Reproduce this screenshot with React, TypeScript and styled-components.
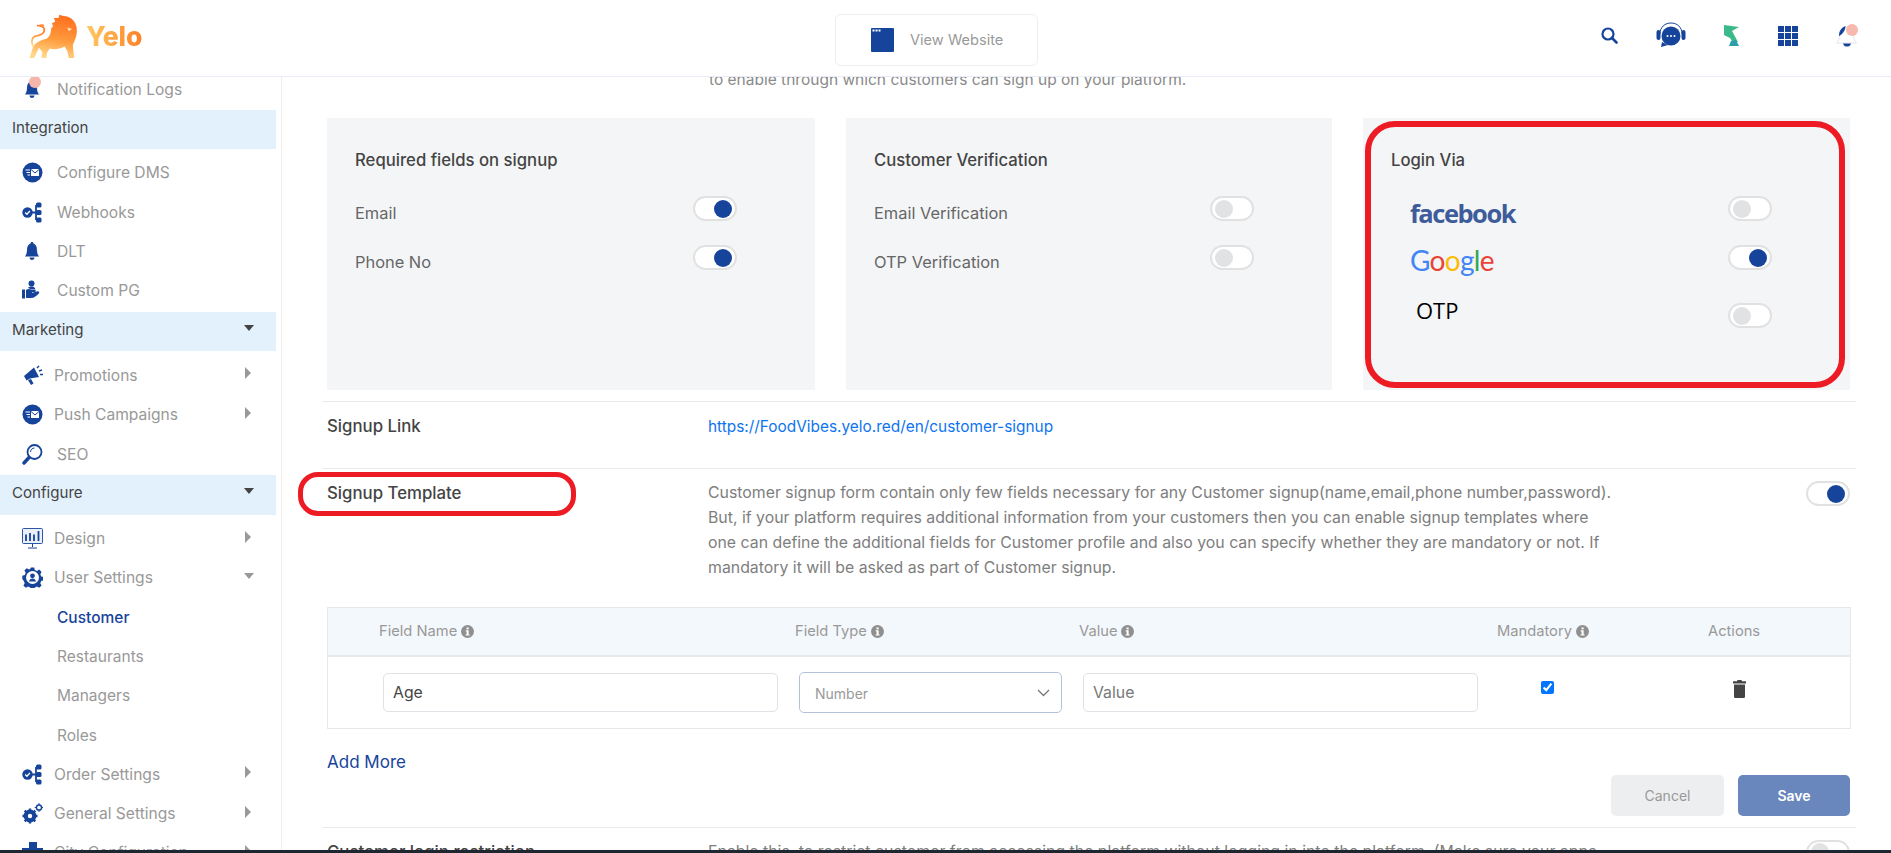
import React from "react";
import styled, { createGlobalStyle } from "styled-components";

const FONT = `Inter, "Liberation Sans", sans-serif`;
const BLUE = "#17449b";

const Global = createGlobalStyle`
  html, body { margin: 0; padding: 0; background: #fff; }
  body { font-family: ${FONT}; overflow: hidden; }
  * { box-sizing: border-box; }
`;

const Shell = styled.div`
  width: 1891px; height: 853px; display: flex; flex-direction: column; overflow: hidden; background: #fff;
`;
const Header = styled.header`
  position: relative; z-index: 2; height: 77px; flex: none; display: flex; align-items: center;
  background: #fff; border-bottom: 1px solid #e9ecf5; padding-right: 32px;
`;
const Brand = styled.div`
  width: 835px; flex: none; display: flex; align-items: center; gap: 8px; padding: 0 0 4px 29px;
`;
const BrandName = styled.span`
  font: 800 26.5px/1 ${FONT};
  background: linear-gradient(90deg, #ffc966, #ff7f24);
  -webkit-background-clip: text; background-clip: text; color: transparent;
`;
const ViewSite = styled.div`
  width: 203px; height: 52px; flex: none; display: flex; align-items: center; gap: 16px; padding-left: 35px;
  border: 1px solid #eeeeee; border-radius: 6px; color: #9a9a9a; font-size: 14.6px; margin-top: 4px;
`;
const HeaderIcons = styled.div`
  margin-left: auto; display: flex; align-items: center; gap: 38px; padding-bottom: 5px;
`;
const Body = styled.div`
  flex: 1; min-height: 0; display: flex; overflow: hidden;
`;
const Sidebar = styled.nav`
  width: 282px; flex: none; padding-right: 5px; border-right: 1px solid #eeeeee; overflow: hidden;
`;
const Band = styled.div`
  height: 39.5px; margin: 1.5px 0 4.3px; background: #e3f1fc; display: flex; align-items: center; justify-content: space-between;
  padding: 0 25px 4px 12px; font-size: 15.1px; color: #444;
`;
const Item = styled.div<{ $arrow?: boolean }>`
  height: 39.3px; display: flex; align-items: center; padding-left: 22px; padding-right: 25px;
  font-size: 15.6px; color: #999;
  > span { margin-left: ${(p) => (p.$arrow ? 11 : 14)}px; flex: 1; }
`;
const FirstItem = styled(Item)`
  height: 31px; padding-bottom: 7px;
`;
const SubItem = styled.div<{ $active?: boolean }>`
  height: 39.3px; display: flex; align-items: center; padding-left: 57px; font-size: 15.5px;
  color: ${(p) => (p.$active ? BLUE : "#999")}; font-weight: ${(p) => (p.$active ? 500 : 400)};
`;
const Caret = styled.i<{ $dir: "right" | "down"; $dark?: boolean }>`
  display: block; width: 0; height: 0; flex: none;
  ${(p) =>
    p.$dir === "right"
      ? `border-top: 6px solid transparent; border-bottom: 6px solid transparent; border-left: 6px solid #999; margin-bottom: 4px;`
      : `border-left: 5.5px solid transparent; border-right: 5.5px solid transparent; border-top: 6px solid ${p.$dark ? "#444" : "#999"}; margin-right: -3px; margin-bottom: 3px;`}
`;
const Main = styled.main`
  flex: 1; min-width: 0; overflow: hidden; padding-left: 40px; padding-right: 35px;
`;
const Lead = styled.div`
  margin: -10px 0 26px; padding-left: 387px; font-size: 15.5px; line-height: 25px; color: #8a8a8a;
`;
const Cards = styled.div`
  display: grid; grid-template-columns: 488px 486px 487px; gap: 31px; margin: 0 5px;
`;
const Card = styled.section`
  height: 272px; background: #f4f5f7; padding: 32px 78px 0 28px;
`;
const CardTitle = styled.h3`
  margin: 0 0 26px; font-size: 16.7px; line-height: 20px; font-weight: 500; color: #444;
`;
const ToggleRow = styled.div<{ $top?: number }>`
  display: flex; justify-content: space-between; align-items: flex-start; height: 29px;
  margin-bottom: 20px; margin-top: ${(p) => p.$top ?? 0}px;
`;
const RowLabel = styled.span`
  padding-top: 4.5px; font-size: 16.4px; line-height: 25px; color: #666;
`;
const Toggle = styled.div<{ $on?: boolean }>`
  width: 44px; height: 25px; flex: none; background: #fff; border: 2px solid #e1e1e1; border-radius: 13px;
  display: flex; align-items: center; padding: 0 3px;
  justify-content: ${(p) => (p.$on ? "flex-end" : "flex-start")};
  &::before {
    content: ""; width: 18px; height: 18px; border-radius: 50%;
    background: ${(p) => (p.$on ? BLUE : "#e0e2e4")};
  }
`;
const Fb = styled.span`
  margin: 3px 0 0 19px; font: 700 25.5px/28px "Open Sans", sans-serif; letter-spacing: -1.5px; color: #3f5c9a;
`;
const Gg = styled.span`
  margin: 1px 0 0 19px; font: 400 28px/28px Lato, sans-serif; letter-spacing: -0.7px;
`;
const Otp = styled.span`
  margin-left: 25px; font: 400 22px/15px "Open Sans", sans-serif; color: #000;
`;
const Rule = styled.div`
  border-top: 1px solid #ebebeb;
`;
const Row = styled(Rule)<{ $first?: boolean }>`
  display: grid; grid-template-columns: 381px 1fr 45px; padding: 12px 5px 0; margin-top: ${(p) => (p.$first ? 11 : 0)}px;
`;
const LinkRow = styled(Row)` height: 67px; `;
const RowTitle = styled.div`
  font-size: 16.8px; line-height: 25px; font-weight: 500; color: #444;
`;
const RowText = styled.div`
  font-size: 15.85px; line-height: 24.9px; color: #7e7e7e; white-space: nowrap;
`;
const SignupLink = styled.a`
  font-size: 15.4px; line-height: 25px; color: #0d74ee; text-decoration: none;
`;
const Marked = styled.div`
  position: relative;
`;
const RedMark = styled.div`
  position: absolute; border: 5px solid #ed1c24; border-radius: 20px; left: -29px; top: -9.5px; width: 278px; height: 44px;
`;
const RedPanel = styled.div`
  position: absolute; border: 6px solid #ed1c24; border-radius: 30px; inset: 3px 5px 2px 2px; pointer-events: none;
`;
const LoginCard = styled(Card)`
  position: relative;
`;
const TableBox = styled.div`
  margin: 26px 5px 0; border: 1px solid #e8e8e8; height: 122px;
`;
const TableHead = styled.div`
  display: grid; grid-template-columns: 51px 416px 284px 418px 211px 1fr; height: 49px; background: #f3f8fc;
  border-bottom: 2px solid #e8ebee; align-items: center; font-size: 14.7px; color: #999;
`;
const HeadCell = styled.div`
  display: flex; align-items: center; gap: 4px;
`;
const Cells = styled.div`
  display: flex; align-items: flex-start; padding: 15px 0 0 55px;
`;
const TextInput = styled.input`
  width: 395px; height: 39px; flex: none; border: 1px solid #dfe2e6; border-radius: 5px; padding: 0 9px; margin-top: 1px;
  font: 400 15.8px ${FONT}; color: #444; outline: none; background: #fff;
  &::placeholder { color: #777; }
`;
const SelectBox = styled.div`
  width: 263px; height: 41px; flex: none; margin: 0 21px; border: 1px solid #b3c2da; border-radius: 5px;
  display: flex; align-items: center; justify-content: space-between; padding: 2px 11px 0 15px; font-size: 14px; color: #999;
`;
const CheckCell = styled.div`
  width: 63px; flex: none; margin-left: 63px; display: flex; height: 26px;
  input { margin: 9px 0 0 0; width: 13px; height: 13px; accent-color: #0075ff; }
`;
const TrashCell = styled.div`
  margin-left: 129px; padding-top: 8px; display: flex;
`;
const AddMore = styled.div`
  margin: 21px 5px 0; font-size: 17px; line-height: 25px; color: ${BLUE};
`;
const Actions = styled.div`
  display: flex; justify-content: flex-end; gap: 14px; margin: 0 6px 11px 0;
`;
const Button = styled.button<{ $primary?: boolean }>`
  width: ${(p) => (p.$primary ? 112 : 113)}px; height: 41px; border: none; border-radius: 5px;
  font: ${(p) => (p.$primary ? 600 : 400)} 14px ${FONT};
  background: ${(p) => (p.$primary ? "#6a87bd" : "#eceef0")};
  color: ${(p) => (p.$primary ? "#fff" : "#999")};
`;
const TaskEdge = styled.div`
  height: 3px; flex: none; background: #1e2730; position: relative; z-index: 3;
`;
const NotifDot = styled.div`
  position: relative; display: flex; flex: none;
  &::after { content: ""; position: absolute; width: 12px; height: 12px; border-radius: 50%; background: #f6b5aa; left: 7px; top: -3px; }
`;

/* ---- drawings ---- */
const Lion = () => (
  <svg width="49" height="44" viewBox="0 0 142 130">
    <defs>
      <linearGradient id="lion" x1="0.6" y1="0" x2="0.4" y2="1">
        <stop offset="0" stopColor="#ff6f1e" />
        <stop offset="0.55" stopColor="#ff9a3c" />
        <stop offset="1" stopColor="#ffd98a" />
      </linearGradient>
    </defs>
    <path fill="url(#lion)" d="M0 130 L10 100 C16 86 30 78 48 74 C58 70 64 58 64 42 L70 36 L66 28 L76 22 L72 12 L86 12 L88 2 L100 6 C124 6 142 26 140 52 C140 68 132 82 128 92 L132 130 L116 130 L112 110 L104 96 C88 104 72 106 60 102 L52 114 L50 130 L36 130 L38 112 L28 100 L14 130 Z" />
    <path fill="none" stroke="url(#lion)" strokeWidth="5" d="M12 98 C2 80 8 66 24 64 C36 62 44 58 44 46 C44 38 32 34 22 34" />
    <ellipse cx="36" cy="34" rx="8" ry="4" fill="#ff8c3a" />
    <path fill="#fff" opacity="0.75" d="M112 40 l14 4 -10 6z" />
  </svg>
);
const Info = () => (
  <svg width="13" height="13" viewBox="0 0 16 16">
    <circle cx="8" cy="8" r="8" fill="#8f8f8f" />
    <rect x="6.800" y="3" width="2.600" height="2.400" fill="#fff" />
    <path fill="#fff" d="M5.800 6.600h3.600v5h1.200v1.400H5.600v-1.400h1.300V8H5.800z" />
  </svg>
);
const Trash = () => (
  <svg width="13" height="18" viewBox="0 0 13 18">
    <path fill="#444" d="M4.500 0h4l.5 1.200H13v2.200H0V1.200h4zM1 4.600h11V16.400c0 .9-.7 1.600-1.600 1.600H2.600C1.700 18 1 17.300 1 16.400z" />
  </svg>
);
const Chevron = () => (
  <svg width="13" height="8" viewBox="0 0 13 8">
    <path fill="none" stroke="#777" strokeWidth="1.300" d="M1 1l5.500 5.500L12 1" />
  </svg>
);
const WindowIcon = () => (
  <svg width="23" height="24" viewBox="0 0 23 24">
    <rect width="23" height="24" rx="1" fill={BLUE} />
    <rect x="1.500" y="1.500" width="2" height="2" fill="#fff" />
    <rect x="4.500" y="1.500" width="2" height="2" fill="#fff" />
    <rect x="7.500" y="1.500" width="2" height="2" fill="#fff" />
  </svg>
);
const SearchIcon = () => (
  <svg width="17" height="17" viewBox="0 0 17 17">
    <circle cx="7" cy="7" r="5.500" fill="none" stroke={BLUE} strokeWidth="2.200" />
    <path stroke={BLUE} strokeWidth="2.600" strokeLinecap="round" d="M11 11L15.500 15.500" />
  </svg>
);
const HeadsetIcon = () => (
  <svg width="30" height="28" viewBox="0 0 30 28">
    <path fill="none" stroke={BLUE} strokeWidth="1" d="M4 12C4 5 9 1 15 1s11 4 11 11" />
    <rect x="0.500" y="8" width="4" height="10" rx="2" fill={BLUE} />
    <rect x="25.500" y="8" width="4" height="10" rx="2" fill={BLUE} />
    <circle cx="15" cy="14" r="9.500" fill={BLUE} />
    <path fill={BLUE} d="M6 20l-1 5 7-2z" />
    <circle cx="11.500" cy="14" r="1" fill="#fff" /><circle cx="15" cy="14" r="1" fill="#fff" /><circle cx="18.500" cy="14" r="1" fill="#fff" />
  </svg>
);
const LeafIcon = () => (
  <svg width="16" height="21" viewBox="0 0 16 21">
    <path fill="#3bb98a" d="M0 0L15 2 8 6 14 17 8 16 6 13 0 10z" />
    <path fill="#2a9fa8" d="M5 21H15L12 15 7 16z" />
  </svg>
);
const GridIcon = () => (
  <svg width="20" height="20" viewBox="0 0 20 20" fill={BLUE}>
    {[0, 7, 14].flatMap((y) => [0, 7, 14].map((x) => <rect key={`${x}-${y}`} x={x} y={y} width="6" height="6" />))}
  </svg>
);
const BellTop = () => (
  <svg width="23" height="23" viewBox="0 0 23 23">
    <path fill="none" stroke="#e2e4ee" d="M0.500 19c2-2 3-4 3-8 0-5 3-8 7-8s7 3 7 8c0 4 1 6 3 8z" />
    <path fill={BLUE} d="M3 12C3 7 5.500 3.500 9.500 2 9.500 6 7 10 3 12zM7 19.500h8C14.500 22 12.500 22.500 11 22.500S7.500 22 7 19.500z" />
    <circle cx="16" cy="6" r="6" fill="#f7b9ad" />
  </svg>
);

type IconName = "bell" | "mail" | "hooks" | "hand" | "horn" | "seo" | "design" | "user" | "gears" | "city";
const SideIcon = ({ name }: { name: IconName }) => {
  const p = { width: 21, height: 21, viewBox: "0 0 21 21", style: { flex: "none" as const } };
  switch (name) {
    case "bell":
      return (
        <svg {...p}>
          <path fill={BLUE} d="M10 1c1 0 1.500.6 1.500 1.600C14 3.600 15 6 15 9c0 3 .8 5 2 6.500H3c1.200-1.500 2-3.500 2-6.500 0-3 1-5.400 3.500-6.400C8.500 1.600 9 1 10 1zM7.500 16.500h5C12.200 18.300 11.200 19 10 19s-2.200-.7-2.500-2.500z" />
          <path fill="none" stroke="#d5def0" strokeWidth=".6" d="M15 8c.5 3 1.500 6 3 8" />
        </svg>
      );
    case "mail":
      return (
        <svg {...p}>
          <circle cx="10.500" cy="10.500" r="10" fill={BLUE} />
          <path fill="#fff" d="M9 7h8v7H9z" />
          <path fill="none" stroke={BLUE} strokeWidth="1" d="M9 7.500l4 3.500 4-3.500" />
          <path stroke="#fff" strokeWidth="1" d="M3.500 8H8M4.500 10.500H8M5.500 13H8" />
        </svg>
      );
    case "hooks":
      return (
        <svg {...p}>
          <circle cx="5.500" cy="10.500" r="5.200" fill={BLUE} />
          <path fill="none" stroke="#fff" strokeWidth="1.300" d="M3.200 10.500l1.700 1.700 3-3.200" />
          <path stroke={BLUE} strokeWidth="1.800" fill="none" d="M10 10.500h4M14 3v15" />
          <rect x="14" y="0.500" width="5.500" height="5" rx="1.500" fill={BLUE} />
          <rect x="14" y="8" width="5.500" height="5" rx="1.500" fill={BLUE} />
          <rect x="14" y="15.500" width="5.500" height="5" rx="1.500" fill={BLUE} />
        </svg>
      );
    case "hand":
      return (
        <svg {...p}>
          <circle cx="9.500" cy="3.500" r="3" fill={BLUE} />
          <path fill={BLUE} d="M0 9.500h3v9H0zM4 10c2-1.500 4-1 6 0h3c1 0 1 2 0 2h-3v.8l5-1.300c1.500-.5 2.800.5 2 1.700-2 2.500-5 4.800-8 4.800H4z" />
          <path fill={BLUE} d="M6 8c.5-1 2-1.500 3.500-1.500S13 7 13.500 9.500H9.500C8.500 9 7 8.500 6 8z" />
        </svg>
      );
    case "horn":
      return (
        <svg {...p}>
          <path fill={BLUE} d="M12 2.500l5 9.500-9 1.500-3.500 2-2.500-4.500 3-2.500z" />
          <path fill={BLUE} d="M6 15l3-1 2.500 4.500-2.500 1.500z" />
          <path stroke={BLUE} strokeWidth="1.500" d="M15 3l2-2M17 6l3-1M18 9.500h3" />
        </svg>
      );
    case "seo":
      return (
        <svg {...p}>
          <circle cx="12.500" cy="8" r="7" fill="none" stroke={BLUE} strokeWidth="1.800" />
          <path fill="none" stroke={BLUE} strokeWidth="1" d="M8.500 8c0-2.500 2-4 4-4" />
          <path stroke={BLUE} strokeWidth="3.400" strokeLinecap="round" d="M7 13.500L2 19" />
        </svg>
      );
    case "design":
      return (
        <svg {...p}>
          <rect x=".5" y=".5" width="20" height="15" rx="1" fill="#eaf0fa" stroke={BLUE} strokeWidth=".9" />
          <path stroke={BLUE} strokeWidth="1.800" d="M4 13V6.500M8 13V5M12 13V6.500M16.500 13V3" />
          <path stroke={BLUE} strokeWidth="1" d="M10.500 16v3M6 20h9" />
        </svg>
      );
    case "user":
      return (
        <svg {...p}>
          <path fill={BLUE} d="M8.800.5h3.400l.6 2.500 2.200.9 2.200-1.300 2.400 2.400-1.300 2.200.9 2.200 2.500.6v3.400l-2.500.6-.9 2.200 1.300 2.200-2.400 2.400-2.200-1.300-2.200.9-.6 2.500H8.800l-.6-2.500-2.200-.9-2.200 1.300-2.400-2.400 1.300-2.200-.9-2.200L.3 12V8.700L2.800 8l.9-2.200L2.400 3.600 4.800 1.200 7 2.500l1.200-.5z" />
          <circle cx="10.500" cy="10.500" r="6.500" fill="#fff" />
          <circle cx="10.500" cy="8.800" r="2.400" fill={BLUE} />
          <path fill={BLUE} d="M7 14.500c.3-2 1.800-3 3.500-3s3.200 1 3.500 3z" />
        </svg>
      );
    case "gears":
      return (
        <svg {...p}>
          <circle cx="8" cy="13" r="4.800" fill="none" stroke={BLUE} strokeWidth="3.200" />
          <path stroke={BLUE} strokeWidth="2.400" d="M8 5.500v15M.5 13h15M2.700 7.700l10.600 10.600M13.300 7.700L2.700 18.300" />
          <circle cx="8" cy="13" r="2.200" fill="#fff" />
          <circle cx="17" cy="4.500" r="2.600" fill="none" stroke={BLUE} strokeWidth="1.500" />
          <path stroke={BLUE} strokeWidth="1.200" d="M17 .2v1.500M17 7.300v1.500M12.700 4.500h1.500M19.800 4.500h1.200" />
        </svg>
      );
    case "city":
      return (
        <svg {...p}>
          <path fill={BLUE} d="M7 0h8v6h6v15H0V6h7z" />
        </svg>
      );
  }
};

const INTEGRATION: { icon: IconName; label: string }[] = [
  { icon: "mail", label: "Configure DMS" },
  { icon: "hooks", label: "Webhooks" },
  { icon: "bell", label: "DLT" },
  { icon: "hand", label: "Custom PG" },
];

const Label = ({ text }: { text: string }) => <span>{text}</span>;

const GoogleMark = styled.span<{ $c: string }>` color: ${(p) => p.$c}; `;
const Google = () => (
  <Gg>
    <GoogleMark $c="#4285f4">G</GoogleMark>
    <GoogleMark $c="#ea4335">o</GoogleMark>
    <GoogleMark $c="#fbbc05">o</GoogleMark>
    <GoogleMark $c="#4285f4">g</GoogleMark>
    <GoogleMark $c="#34a853">l</GoogleMark>
    <GoogleMark $c="#ea4335">e</GoogleMark>
  </Gg>
);

export default function App() {
  return (
    <Shell>
      <Global />
      <Header>
        <Brand>
          <Lion />
          <BrandName>Yelo</BrandName>
        </Brand>
        <ViewSite>
          <WindowIcon />
          View Website
        </ViewSite>
        <HeaderIcons>
          <SearchIcon />
          <HeadsetIcon />
          <LeafIcon />
          <GridIcon />
          <BellTop />
        </HeaderIcons>
      </Header>
      <Body>
        <Sidebar>
          <FirstItem>
            <NotifDot><SideIcon name="bell" /></NotifDot>
            <Label text="Notification Logs" />
          </FirstItem>
          <Band>Integration</Band>
          {INTEGRATION.map((i) => (
            <Item key={i.label}><SideIcon name={i.icon} /><Label text={i.label} /></Item>
          ))}
          <Band>Marketing<Caret $dir="down" $dark /></Band>
          <Item $arrow><SideIcon name="horn" /><Label text="Promotions" /><Caret $dir="right" /></Item>
          <Item $arrow><SideIcon name="mail" /><Label text="Push Campaigns" /><Caret $dir="right" /></Item>
          <Item><SideIcon name="seo" /><Label text="SEO" /></Item>
          <Band>Configure<Caret $dir="down" $dark /></Band>
          <Item $arrow><SideIcon name="design" /><Label text="Design" /><Caret $dir="right" /></Item>
          <Item $arrow><SideIcon name="user" /><Label text="User Settings" /><Caret $dir="down" /></Item>
          <SubItem $active>Customer</SubItem>
          <SubItem>Restaurants</SubItem>
          <SubItem>Managers</SubItem>
          <SubItem>Roles</SubItem>
          <Item $arrow><SideIcon name="hooks" /><Label text="Order Settings" /><Caret $dir="right" /></Item>
          <Item $arrow><SideIcon name="gears" /><Label text="General Settings" /><Caret $dir="right" /></Item>
          <Item $arrow><SideIcon name="city" /><Label text="City Configuration" /><Caret $dir="right" /></Item>
        </Sidebar>
        <Main>
          <Lead>to enable through which customers can sign up on your platform.</Lead>
          <Cards>
            <Card>
              <CardTitle>Required fields on signup</CardTitle>
              <ToggleRow><RowLabel>Email</RowLabel><Toggle $on /></ToggleRow>
              <ToggleRow><RowLabel>Phone No</RowLabel><Toggle $on /></ToggleRow>
            </Card>
            <Card>
              <CardTitle>Customer Verification</CardTitle>
              <ToggleRow><RowLabel>Email Verification</RowLabel><Toggle /></ToggleRow>
              <ToggleRow><RowLabel>OTP Verification</RowLabel><Toggle /></ToggleRow>
            </Card>
            <LoginCard>
              <CardTitle>Login Via</CardTitle>
              <ToggleRow><Fb>facebook</Fb><Toggle /></ToggleRow>
              <ToggleRow><Google /><Toggle $on /></ToggleRow>
              <ToggleRow $top={29}><Otp>OTP</Otp><Toggle /></ToggleRow>
              <RedPanel />
            </LoginCard>
          </Cards>
          <LinkRow $first>
            <RowTitle>Signup Link</RowTitle>
            <SignupLink>https://FoodVibes.yelo.red/en/customer-signup</SignupLink>
          </LinkRow>
          <Row>
            <Marked>
              <RowTitle>Signup Template</RowTitle>
              <RedMark />
            </Marked>
            <RowText>
              Customer signup form contain only few fields necessary for any Customer signup(name,email,phone number,password).<br />
              But, if your platform requires additional information from your customers then you can enable signup templates where<br />
              one can define the additional fields for Customer profile and also you can specify whether they are mandatory or not. If<br />
              mandatory it will be asked as part of Customer signup.
            </RowText>
            <Toggle $on />
          </Row>
          <TableBox>
            <TableHead>
              <div />
              <HeadCell>Field Name <Info /></HeadCell>
              <HeadCell>Field Type <Info /></HeadCell>
              <HeadCell>Value <Info /></HeadCell>
              <HeadCell>Mandatory <Info /></HeadCell>
              <HeadCell>Actions</HeadCell>
            </TableHead>
            <Cells>
              <TextInput defaultValue="Age" readOnly />
              <SelectBox>Number<Chevron /></SelectBox>
              <TextInput placeholder="Value" readOnly />
              <CheckCell><input type="checkbox" defaultChecked readOnly /></CheckCell>
              <TrashCell><Trash /></TrashCell>
            </Cells>
          </TableBox>
          <AddMore>Add More</AddMore>
          <Actions>
            <Button>Cancel</Button>
            <Button $primary>Save</Button>
          </Actions>
          <Row>
            <RowTitle>Customer login restriction</RowTitle>
            <RowText>Enable this, to restrict customer from accessing the platform without logging in into the platform. (Make sure your apps</RowText>
            <Toggle />
          </Row>
        </Main>
      </Body>
      <TaskEdge />
    </Shell>
  );
}
